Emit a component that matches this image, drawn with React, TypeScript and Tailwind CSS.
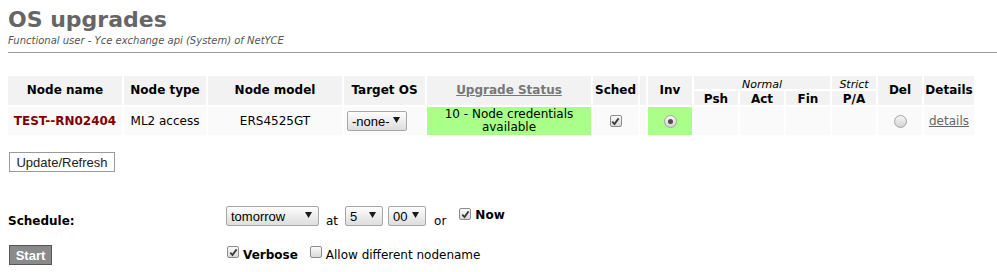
import React from 'react';

function Check({ checked, className = '' }: { checked?: boolean; className?: string }) {
  return (
    <span
      className={`inline-flex h-[12px] w-[12px] shrink-0 items-center justify-center rounded-[2px] border border-[#8c8c8c] bg-linear-to-b from-[#fbfbfb] to-[#d9d9d9] ${className}`}
    >
      {checked && (
        <svg width="9" height="9" viewBox="0 0 9 9">
          <path d="M1.3 4.6 L3.5 7 L7.6 1.4" stroke="#3a3a3a" strokeWidth="1.8" fill="none" />
        </svg>
      )}
    </span>
  );
}

function Radio({ checked }: { checked?: boolean }) {
  return (
    <span className="inline-flex h-[13px] w-[13px] items-center justify-center rounded-full border border-[#a3a3a3] bg-linear-to-b from-[#f6f6f6] to-[#d3d3d3]">
      {checked && <span className="h-[5px] w-[5px] rounded-full bg-[#4d4d4d]" />}
    </span>
  );
}

function Select({ label, className }: { label: string; className: string }) {
  return (
    <span
      className={`inline-flex h-[20px] shrink-0 items-center justify-between rounded-[2px] border border-[#a6a6a6] bg-linear-to-b from-[#fdfdfd] to-[#dddddd] pl-[4px] pr-[6px] font-['Liberation_Sans',Arial,sans-serif] text-[13px] leading-[15px] text-black ${className}`}
    >
      <span>{label}</span>
      <svg width="7" height="6" viewBox="0 0 7 6" className="-mt-[3px]">
        <path d="M0 0H7L3.5 6Z" fill="#1a1a1a" />
      </svg>
    </span>
  );
}

const widths = [
  'w-[114px]',
  'w-[82px]',
  'w-[134px]',
  'w-[81px]',
  'w-[164px]',
  'w-[45px]',
  'w-[6px]',
  'w-[44px]',
  'w-[44px]',
  'w-[44px]',
  'w-[44px]',
  'w-[44px]',
  'w-[44px]',
  'w-[50px]',
];

export default function App() {
  const th = 'bg-[#f2f2f2] p-0 text-center align-middle font-bold leading-[15px]';
  const td = 'bg-[#fafafa] p-0 text-center align-middle leading-[15px]';

  return (
    <div className="h-[272px] w-[997px] overflow-hidden bg-white font-['DejaVu_Sans',Verdana,sans-serif] text-[12px] text-black">
      <h1 className="pl-[8px] pt-[7px] text-[22px] leading-[26px] font-bold text-[#666666]">OS upgrades</h1>
      <div className="mt-[2px] pl-[8px] text-[10px] leading-[12px] text-[#555555] italic">
        Functional user - Yce exchange api (System) of NetYCE
      </div>
      <div className="mt-[5px] ml-[8px] border-t border-[#9a9a9a]" />

      <table className="mt-[21px] ml-[6px] w-[970px] table-fixed border-separate border-spacing-[2px]">
        <colgroup>
          {widths.map((w, i) => (
            <col key={i} className={w} />
          ))}
        </colgroup>
        <thead>
          <tr className="h-[13px]">
            <th rowSpan={2} className={th}>Node name</th>
            <th rowSpan={2} className={th}>Node type</th>
            <th rowSpan={2} className={th}>Node model</th>
            <th rowSpan={2} className={th}>Target OS</th>
            <th rowSpan={2} className={th}>
              <span className="text-[#777777] underline">Upgrade Status</span>
            </th>
            <th rowSpan={2} className={th}>Sched</th>
            <th rowSpan={2} className={th}></th>
            <th rowSpan={2} className={th}>Inv</th>
            <th colSpan={3} className="bg-[#f2f2f2] p-0 text-center align-bottom text-[11px] leading-[9px] font-normal italic">
              Normal
            </th>
            <th className="bg-[#f2f2f2] p-0 text-center align-bottom text-[11px] leading-[9px] font-normal italic">
              Strict
            </th>
            <th rowSpan={2} className={th}>Del</th>
            <th rowSpan={2} className={th}>Details</th>
          </tr>
          <tr className="h-[14px]">
            {['Psh', 'Act', 'Fin', 'P/A'].map((h) => (
              <th key={h} className="bg-[#f2f2f2] p-0 text-center align-bottom leading-[12px] font-bold">
                {h}
              </th>
            ))}
          </tr>
        </thead>
        <tbody>
          <tr className="h-[28px]">
            <td className={`${td} font-bold text-[#800000]`}>TEST--RN02404</td>
            <td className={td}>ML2 access</td>
            <td className={td}>ERS4525GT</td>
            <td className={`${td} pl-[3px] text-left`}>
              <Select label="-none-" className="w-[60px] align-middle" />
            </td>
            <td className="bg-[#aaff88] p-0 text-center align-middle leading-[13px]">10 - Node credentials available</td>
            <td className={td}>
              <span className="flex justify-center">
                <Check checked />
              </span>
            </td>
            <td className={td}></td>
            <td className="bg-[#aaff88] p-0 text-center align-middle">
              <span className="flex justify-center">
                <Radio checked />
              </span>
            </td>
            <td className={td}></td>
            <td className={td}></td>
            <td className={td}></td>
            <td className={td}></td>
            <td className={td}>
              <span className="flex justify-center">
                <Radio />
              </span>
            </td>
            <td className={td}>
              <span className="text-[#666666] underline">details</span>
            </td>
          </tr>
        </tbody>
      </table>

      <button className="mt-[15px] ml-[9px] flex h-[20px] w-[106px] items-center justify-center border border-[#9a9a9a] bg-white font-['Liberation_Sans',Arial,sans-serif] text-[13px] leading-[15px] text-[#222222]">
        Update/Refresh
      </button>

      <div className="mt-[34px] grid grid-cols-[218px_auto] gap-y-[19px] pl-[8px]">
        <div className="flex h-[20px] items-end">
          <span className="leading-[9px] font-bold">Schedule:</span>
        </div>
        <div className="flex h-[20px] items-end">
          <Select label="tomorrow" className="w-[93px]" />
          <span className="ml-[7px] leading-[9px]">at</span>
          <Select label="5" className="ml-[7px] w-[38px]" />
          <Select label="00" className="ml-[5px] w-[38px]" />
          <span className="ml-[8px] leading-[9px]">or</span>
          <span className="mt-[2px] ml-[13px] flex items-end self-start">
            <Check checked />
            <span className="ml-[4px] leading-[9px] font-bold">Now</span>
          </span>
        </div>

        <div className="flex">
          <button className="ml-[1px] flex h-[20px] w-[43px] items-center justify-center border border-[#555555] bg-[#8a8a8a] font-['Liberation_Sans',Arial,sans-serif] text-[13px] leading-[15px] font-bold text-white">
            Start
          </button>
        </div>
        <div className="flex h-[20px] items-end pb-[5px]">
          <Check checked className="ml-[1px] mb-[2px]" />
          <span className="ml-[4px] leading-[9px] font-bold">Verbose</span>
          <Check className="ml-[12px] mb-[2px]" />
          <span className="ml-[4px] leading-[9px]">Allow different nodename</span>
        </div>
      </div>
    </div>
  );
}
